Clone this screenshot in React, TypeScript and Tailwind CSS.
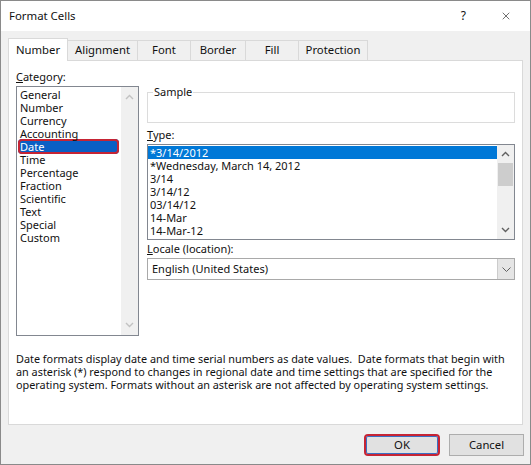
import { X } from 'lucide-react'

const categories = ['General', 'Number', 'Currency', 'Accounting', 'Date', 'Time', 'Percentage', 'Fraction', 'Scientific', 'Text', 'Special', 'Custom']

const types = ['*3/14/2012', '*Wednesday, March 14, 2012', '3/14', '3/14/12', '03/14/12', '14-Mar', '14-Mar-12']

const tabs = [
  { label: 'Number', width: 'w-[60px] border-l', active: true },
  { label: 'Alignment', width: 'w-[70px]' },
  { label: 'Font', width: 'w-[53px]' },
  { label: 'Border', width: 'w-[55px]' },
  { label: 'Fill', width: 'w-[53px]' },
  { label: 'Protection', width: 'w-[69px]' },
]

function Chevron({ up }: { up?: boolean }) {
  return (
    <svg width="9" height="6" viewBox="0 0 9 6">
      <path d={up ? 'M1 5 4.5 1.5 8 5' : 'M1 1 4.5 4.5 8 1'} fill="none" stroke="currentColor" strokeWidth="1.4" />
    </svg>
  )
}

export default function App() {
  return (
    <div className="flex h-[465px] w-[531px] flex-col border border-[#8a8a8a] bg-[#f0f0f0] font-['Noto_Sans',sans-serif] text-[11px] text-[#111]">
      {/* title bar */}
      <div className="flex h-[30px] items-center bg-white pl-[8px]">
        <span className="flex-1 text-[11.4px]">Format Cells</span>
        <span className="mr-[34px] text-[12px]">?</span>
        <X className="mr-[18px] h-[12px] w-[12px]" strokeWidth={1.2} />
      </div>

      <div className="flex flex-1 flex-col px-[7px] pt-[7px]">
        {/* tabs */}
        <div className="flex h-[23px] items-end text-[11.3px]">
          {tabs.map(t =>
            t.active ? (
              <div
                key={t.label}
                className={`relative z-10 flex h-[23px] items-center justify-center border-t border-r border-[#d9d9d9] bg-white ${t.width}`}
              >
                {t.label}
              </div>
            ) : (
              <div
                key={t.label}
                className={`flex h-[21px] items-center justify-center border-t border-r border-[#d9d9d9] pb-px ${t.width}`}
              >
                {t.label}
              </div>
            )
          )}
        </div>

        {/* panel */}
        <div className="-mt-px flex h-[365px] flex-col border border-[#d9d9d9] bg-white px-[7px] pt-[8px]">
          <div className="flex">
            {/* category */}
            <div className="flex w-[123px] flex-col">
              <div className="h-[16px] leading-[16px]">
                <span className="underline">C</span>ategory:
              </div>
              <div className="mt-px flex h-[250px] border border-[#828790]">
                <div className="flex-1 pt-px">
                  {categories.map(c =>
                    c === 'Date' ? (
                      <div
                        key={c}
                        className="-my-px ml-px h-[15px] w-[101px] rounded-[4px] bg-[#0a5fc4] pl-[2px] leading-[15px] text-white ring-2 ring-[#c62434] ring-inset"
                      >
                        {c}
                      </div>
                    ) : (
                      <div key={c} className="h-[13px] pl-[3px] leading-[13px]">
                        {c}
                      </div>
                    )
                  )}
                </div>
                <div className="flex w-[17px] flex-col items-center justify-between bg-[#f0f0f0] py-[7px] text-[#c2c2c2]">
                  <Chevron up />
                  <Chevron />
                </div>
              </div>
            </div>

            {/* right column */}
            <div className="ml-[8px] flex flex-1 flex-col">
              <fieldset className="mt-[16px] h-[38px] border border-[#dcdcdc] px-[5px]">
                <legend className="px-px leading-[14px]">Sample</legend>
              </fieldset>

              <div className="mt-[4px] h-[16px] leading-[16px]">
                <span className="underline">T</span>ype:
              </div>
              <div className="mt-px flex h-[96px] border border-[#828790]">
                <div className="flex-1 pt-px">
                  {types.map((t, i) => (
                    <div
                      key={t}
                      className={`h-[13px] pl-[2px] leading-[13px] ${i === 0 ? 'bg-[#0078d7] text-white' : ''}`}
                    >
                      {t}
                    </div>
                  ))}
                </div>
                <div className="flex w-[17px] flex-col bg-[#f0f0f0] text-[#606060]">
                  <div className="flex h-[18px] items-center justify-center">
                    <Chevron up />
                  </div>
                  <div className="mx-px h-[23px] bg-[#cdcdcd]" />
                  <div className="flex-1" />
                  <div className="flex h-[18px] items-center justify-center">
                    <Chevron />
                  </div>
                </div>
              </div>

              <div className="mt-px h-[16px] leading-[16px]">
                <span className="underline">L</span>ocale (location):
              </div>
              <div className="mt-px flex h-[22px] border border-[#a9a9a9]">
                <div className="flex-1 pl-[4px] leading-[20px]">English (United States)</div>
                <div className="flex w-[17px] items-center justify-center border-l border-[#cccccc] bg-[#e5e5e5] text-[#606060]">
                  <svg width="9" height="5" viewBox="0 0 9 5">
                    <path d="M0.5 0.5 4.5 4.5 8.5 0.5" fill="none" stroke="currentColor" strokeWidth="1" />
                  </svg>
                </div>
              </div>
            </div>
          </div>

          <p className="mt-[16px] text-[10.85px] leading-[13px] whitespace-pre">
            {'Date formats display date and time serial numbers as date values.  Date formats that begin with\nan asterisk (*) respond to changes in regional date and time settings that are specified for the\noperating system. Formats without an asterisk are not affected by operating system settings.'}
          </p>
        </div>

        {/* buttons */}
        <div className="-mr-px mt-[9px] flex justify-end gap-[9px] text-[11.3px]">
          <button className="h-[22px] w-[76px] rounded-[4px] border-2 border-[#c62434] bg-[#e1e1e1] shadow-[inset_0_0_0_1px_#3a6fc4]">
            OK
          </button>
          <button className="h-[22px] w-[75px] border border-[#adadad] bg-[#e1e1e1]">Cancel</button>
        </div>
      </div>
    </div>
  )
}
